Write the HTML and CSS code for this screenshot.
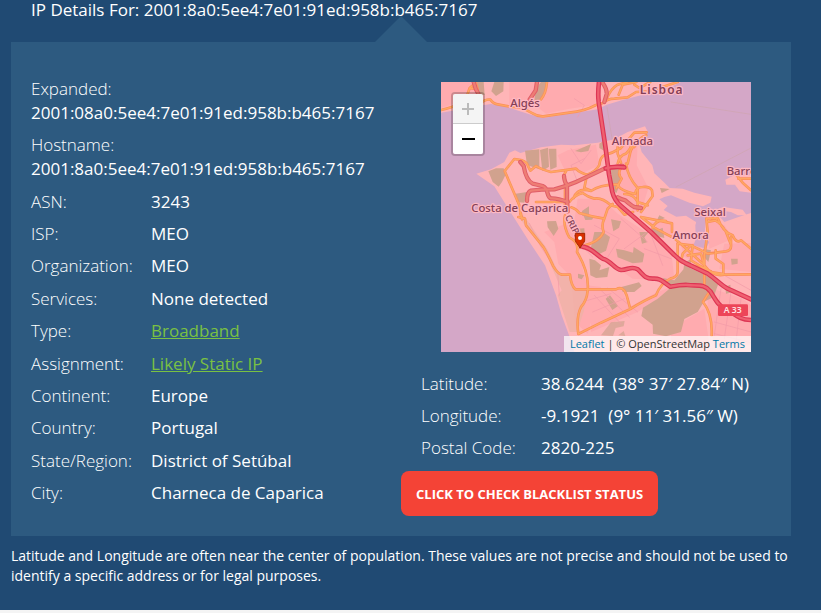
FILE: index.html
```html
<!DOCTYPE html>
<html lang="en">
<head>
<meta charset="utf-8">
<meta name="viewport" content="width=device-width, initial-scale=1">
<title>IP Details</title>
<link rel="stylesheet" href="styles.css">
</head>
<body>
<main class="page">
  <h1 class="title">IP Details For: 2001:8a0:5ee4:7e01:91ed:958b:b465:7167</h1>
  <section class="panel">
    <dl class="details">
      <div class="row stacked"><dt>Expanded:</dt><dd>2001:08a0:5ee4:7e01:91ed:958b:b465:7167</dd></div>
      <div class="row stacked"><dt>Hostname:</dt><dd>2001:8a0:5ee4:7e01:91ed:958b:b465:7167</dd></div>
      <div class="row"><dt>ASN:</dt><dd>3243</dd></div>
      <div class="row"><dt>ISP:</dt><dd>MEO</dd></div>
      <div class="row"><dt>Organization:</dt><dd>MEO</dd></div>
      <div class="row"><dt>Services:</dt><dd>None detected</dd></div>
      <div class="row"><dt>Type:</dt><dd><a href="#">Broadband</a></dd></div>
      <div class="row"><dt>Assignment:</dt><dd><a href="#">Likely Static IP</a></dd></div>
      <div class="row"><dt>Continent:</dt><dd>Europe</dd></div>
      <div class="row"><dt>Country:</dt><dd>Portugal</dd></div>
      <div class="row"><dt>State/Region:</dt><dd>District of Setúbal</dd></div>
      <div class="row"><dt>City:</dt><dd>Charneca de Caparica</dd></div>
    </dl>
    <div class="location">
      <div class="map">
        <svg class="tiles" viewBox="0 0 930 810" preserveAspectRatio="xMidYMid slice" role="img" aria-label="Map">
          <rect width="930" height="810" fill="#d4a7c7"/>
          <!-- land -->
          <g fill="#ffb5b7">
            <path d="M0 0H720L690 14L600 40L545 54L497 68L470 82L380 96L305 108L270 98L232 86L195 74L150 66L105 73L60 82L0 92Z"/>
            <path d="M106 275L150 262L190 240L205 212L222 205L238 213L300 196L360 188L400 190L470 182L520 172L560 150L612 133L621 150L595 185L602 210L634 250L640 274L668 300L686 318L725 320L760 332L812 344L808 362L786 373L745 362L690 340L670 345L655 352L680 372L668 384L706 404L735 401L765 420L764 470L780 470L788 404L835 403L850 420L884 408L908 400L930 393V810H400L385 762L362 700L345 640L312 550L262 475L205 385L160 313Z"/>
            <path d="M930 278L885 277L853 293L856 308L882 308L896 328L930 332Z"/>
            <path d="M824 383L846 375L905 383L917 400L890 400L870 390Z"/>
          </g>
          <!-- built-up areas -->
          <g fill="#ffa7ac" opacity=".7">
            <path d="M0 0H110L118 42L72 55L0 78Z"/><path d="M205 0H470L463 69L385 80L315 95L277 65L205 70Z"/>
            <path d="M310 450L388 420L408 490L437 610L480 615L440 755L402 720L390 585L352 545L340 480Z"/>
            <path d="M380 205L465 188L475 250L430 270L370 262L350 220ZM540 190L590 176L587 250L622 318L600 390L540 390L525 305Z"/>
            <path d="M410 350L485 352L530 395L630 460L690 500L700 595L575 590L510 545L437 495L395 450Z"/>
            <path d="M450 625L540 618L565 675L645 632L700 610L650 650L590 690L450 750ZM720 490L775 480L790 550L730 525ZM800 615L905 650L930 670V790H820L800 690ZM690 740L790 680L805 790H690ZM850 485L930 483V570L835 560Z"/>
            <path d="M620 420L690 425L700 470L640 450ZM800 415L850 430L875 470L805 500Z"/>
          </g>
          <!-- coastal dunes and open ground -->
          <path d="M248 400L318 500L350 566L388 588L402 625L438 625L428 690L408 750L386 750L350 640L362 625L312 508L240 415Z" fill="#edb1a5" opacity=".75"/>
          <!-- woodland -->
          <g fill="#d1a28e">
            <path d="M108 0H128L131 39L115 38ZM160 0H188L187 28L165 42L151 28ZM285 20L300 0H318L305 52L280 55Z"/>
            <path d="M252 206L295 202V262L258 249ZM297 204L321 197L324 254L304 267ZM323 200H346L347 255L328 263Z"/>
            <path d="M142 268L165 259L188 259L193 280L183 300L173 314L155 300ZM402 207L450 186L442 207L420 211ZM475 185L492 173L489 206L475 198ZM224 335L258 330L250 362L226 360ZM510 262L535 256L536 285L540 300L526 334L513 323Z"/>
            <path d="M318 418L345 417L352 440L338 462L320 436ZM423 387L444 373L444 397L424 402ZM427 400L460 403L453 413L433 414ZM410 440L430 439L431 460L415 473ZM460 450L485 450L507 465L495 506L475 516L449 500ZM510 412L540 418L534 437L517 448ZM525 500L550 505L576 512L578 495L610 515L605 541L575 544L530 526ZM595 450L623 450L610 466L618 481L603 485ZM630 440L655 442L665 437L670 468L646 462ZM655 400L672 408L645 420Z"/>
            <path d="M445 530L462 535L480 550L475 565L505 555L499 585L465 588L448 580ZM411 575L430 580L422 592L411 588ZM541 615L594 601L602 612L580 630L545 630ZM494 650L507 640L531 672L514 684ZM665 588L700 595L735 553L795 580L834 600L825 625L818 645L788 660L770 690L730 711L720 750L675 763L636 755L635 728L601 702L606 677L650 650L688 618ZM730 543L751 530L748 560L726 570ZM853 615L868 608L869 632L855 635ZM786 500L810 505L802 540L785 520ZM870 530H890V545L872 548ZM657 318L686 321L662 333Z"/>
            <path d="M480 760L510 721L551 717L548 733L524 738L516 762ZM532 760L548 747L553 762Z" opacity=".7"/>
          </g>
          <path d="M771 403L795 403L790 465L805 480L795 500L758 490L765 468L763 430Z" fill="#d4a7c7"/>
          <!-- local streets and ferry lines -->
          <g class="line streets">
            <path d="M265 424L300 495L350 570L355 640M390 200L420 245L450 205M410 105L430 70L400 50M410 300L390 250L430 230"/>
            <path d="M460 640L540 725M480 625L565 705M500 618L590 690M440 655L510 635M455 690L550 650"/>
            <path d="M840 620L820 760M870 630L850 770M900 650L885 780M820 720L930 750M820 755L930 782M850 580L930 625"/>
            <path d="M420 490L455 525M460 430L535 470L500 525M550 500L625 445L665 550M610 500L690 530M540 410L620 480"/>
            <path class="ferry" d="M690 60L930 97M930 198L705 315M498 75L515 182"/>
          </g>
          <!-- main roads -->
          <defs>
            <g id="main-roads">
              <path d="M0 84Q40 75 72 58L86 18L110 22L104 0M86 18L100 6M118 64Q135 50 148 53Q158 66 170 67L212 75Q235 74 248 80L275 94Q290 104 307 103L385 92Q430 88 465 69L486 63Q500 50 520 50L560 46L585 30L625 28L710 0M498 48Q510 20 530 8L560 0M533 38L545 8L586 0M300 52Q315 35 318 0M628 0L595 18L580 8"/>
              <path d="M243 412L235 370L191 267L220 231L240 234Q258 240 260 250L268 266L285 252Q300 262 330 270L405 260Q415 272 438 278Q465 268 475 249Q478 225 490 220Q515 213 540 198L580 152L617 151M438 278L430 318L447 325M375 268Q365 280 372 292V370"/>
              <path d="M232 405L252 410L255 430L308 496Q322 520 337 553Q350 575 362 578H387Q390 610 403 622H525Q540 614 550 625L557 640L568 681Q610 655 645 640Q658 605 688 590Q710 585 710 570V485M243 410L238 395M372 400Q365 430 385 466Q414 480 408 510Q445 570 440 625Q438 655 420 675Q405 705 412 756L480 722L568 681M285 360H385Q400 340 425 333Q440 345 460 350Q482 345 510 370L530 375L550 398L576 390M391 376Q405 380 415 393Q455 405 490 410Q480 430 488 450Q475 480 425 492M490 410L500 380L515 366"/>
              <path d="M398 348Q410 315 450 327Q480 306 530 308Q535 325 582 336Q585 315 605 315Q625 312 633 325L635 342L600 390M540 258Q528 275 542 290L526 318M555 245Q560 285 590 318V360L620 370M550 336Q580 337 590 360V385M530 195V215L540 242M575 180Q570 200 555 215Q535 220 530 245M592 178Q570 195 567 215L560 245M616 160Q595 165 580 195"/>
              <path d="M600 405L645 440L700 469L736 500L790 550Q815 585 850 578L930 577M600 405L650 415L693 424V450M635 438Q645 410 675 417M710 485L750 490L800 515L855 508Q872 505 870 488V465M796 410L800 450L790 520V610M796 410L830 408Q845 450 875 460Q885 485 900 475L930 500M800 420L822 415Q842 425 855 450L870 488M750 490L725 515L720 540L810 568M755 490L750 535L795 562M824 505V530L847 546V576L810 570M740 520L780 515L792 560M790 610L805 630L786 660Q815 695 812 760"/>
              <path d="M885 277L905 302L930 325M892 290H930"/>
            </g>
            <g id="carriageways">
              <path d="M238 240L248 252Q255 295 275 305L305 312C325 320 315 345 330 349Q350 348 380 360M258 357Q258 330 270 326Q300 322 340 322Q370 315 405 300Q460 275 490 260L545 252M369 282Q370 300 378 308V350L380 388M483 0Q498 20 497 36L490 60M530 346Q540 352 553 355Q570 370 580 375L600 378M98 0L104 20L112 35M288 0L284 25L266 52"/>
            </g>
            <g id="motorways">
              <path d="M474 0Q470 35 473 60L482 120L494 200L504 277L514 330Q520 355 540 372L630 450L700 519Q715 535 735 544L800 575C830 595 840 610 860 620L930 652M494 259Q520 252 550 256"/>
              <path d="M424 494C450 497 462 515 485 530C510 535 520 562 540 564C560 565 570 550 590 562C605 575 610 590 635 590C660 588 665 600 688 614C700 612 720 608 740 609C770 612 790 605 808 628C825 655 830 668 850 680C880 690 885 712 930 714"/>
            </g>
          </defs>
          <use href="#main-roads" class="line main-edge"/>
          <use href="#main-roads" class="line main-core"/>
          <use href="#carriageways" class="line carriage-edge"/>
          <use href="#carriageways" class="line carriage-core"/>
          <use href="#motorways" class="line motorway-edge"/>
          <use href="#motorways" class="line motorway-core"/>
          <g class="places">
            <text x="252" y="76">Algés</text>
            <text x="662" y="36" class="city">Lisboa</text>
            <text x="574" y="189">Almada</text>
            <text x="236" y="390">Costa de Caparica</text>
            <text x="857" y="278" class="start">Barreiro</text>
            <text x="807" y="402">Seixal</text>
            <text x="749" y="472">Amora</text>
            <text x="0" y="0" class="road" transform="translate(371 405) rotate(62)">CRIPS</text>
          </g>
          <rect x="831" y="667" width="90" height="35" rx="4" fill="#ed4558"/>
          <text x="875" y="694" class="shield">A 33</text>
          <path d="M403 454H431V475C431 482 421 488 417 499C413 488 403 482 403 475Z" fill="#d93100" stroke="#a62500" stroke-width="3"/>
          <circle cx="417" cy="468" r="6" fill="#fff"/>
        </svg>
        <div class="zoom">
          <button type="button" class="disabled" aria-label="Zoom in" disabled>
            <svg viewBox="0 0 30 30" aria-hidden="true"><path d="M9 15H21M15 9V21" stroke="#bbb" stroke-width="2"/></svg>
          </button>
          <button type="button" aria-label="Zoom out">
            <svg viewBox="0 0 30 30" aria-hidden="true"><path d="M9 15H22" stroke="#000" stroke-width="2"/></svg>
          </button>
        </div>
        <div class="attribution"><a href="#">Leaflet</a> | © OpenStreetMap <a href="#">Terms</a></div>
      </div>
      <dl class="coords">
        <div class="row"><dt>Latitude:</dt><dd>38.6244&nbsp; (38° 37′ 27.84″ N)</dd></div>
        <div class="row"><dt>Longitude:</dt><dd>-9.1921&nbsp; (9° 11′ 31.56″ W)</dd></div>
        <div class="row"><dt>Postal Code:</dt><dd>2820-225</dd></div>
      </dl>
      <button type="button" class="blacklist">CLICK TO CHECK BLACKLIST STATUS</button>
    </div>
  </section>
  <p class="note">Latitude and Longitude are often near the center of population. These values are not precise and should not be used to identify a specific address or for legal purposes.</p>
</main>
</body>
</html>
```
FILE: styles.css
```css
* {
  box-sizing: border-box;
}

body {
  margin: 0;
  background: #f4f4f4;
  color: #fff;
  font-family: "Open Sans", "Noto Sans", sans-serif;
  font-size: 17px;
  line-height: 24px;
}

.page {
  padding: 0 30px 24px 11px;
  background: #204a73;
}

.title {
  position: relative;
  z-index: 1;
  margin: 0;
  padding: 0 20px 22px;
  font-size: 17px;
  font-weight: 400;
  line-height: 20px;
}

.panel {
  position: relative;
  display: grid;
  grid-template-columns: 1fr 1fr;
  padding: 35px 0 20px;
  background: #2d5a80;
}

.panel::before {
  content: "";
  position: absolute;
  bottom: 100%;
  left: 50%;
  margin-left: -26px;
  border: 26px solid transparent;
  border-top: 0;
  border-bottom-color: #2d5a80;
}

dl,
dd {
  margin: 0;
}

.details,
.coords {
  display: flex;
  flex-direction: column;
  gap: 8px;
  padding: 0 0 0 20px;
}

.details {
  justify-content: space-between;
  padding-bottom: 11px;
}

.row {
  display: grid;
  grid-template-columns: 120px 1fr;
}

.stacked {
  display: block;
}

dt {
  font-weight: 300;
}

dd {
  white-space: nowrap;
}

.details a {
  color: #7ac143;
}

.map {
  position: relative;
  height: 270px;
  margin: 5px 40px 20px;
  overflow: hidden;
}

.tiles {
  display: block;
  width: 100%;
  height: 100%;
}

.line {
  fill: none;
  stroke-linejoin: round;
  stroke-linecap: round;
}

.streets {
  stroke: #f29aa8;
  stroke-width: 2px;
}

.ferry {
  stroke: #cfa4af;
}

.main-edge {
  stroke: #fb8f5a;
  stroke-width: 8px;
}

.main-core {
  stroke: #ffa763;
  stroke-width: 4px;
}

.carriage-edge {
  stroke: #e05d68;
  stroke-width: 13px;
}

.carriage-core {
  stroke: #ee7d74;
  stroke-width: 7px;
}

.motorway-edge {
  stroke: #dd3554;
  stroke-width: 14px;
}

.motorway-core {
  stroke: #ef6070;
  stroke-width: 7px;
}

.places text {
  fill: #853f56;
  stroke: #ffb9c3;
  stroke-width: 7px;
  stroke-linejoin: round;
  paint-order: stroke;
  font-family: "Noto Sans", sans-serif;
  font-size: 34px;
  font-weight: 500;
  text-anchor: middle;
}

.places .city {
  font-size: 36px;
  font-weight: 600;
  letter-spacing: 3px;
}

.places .start,
.places .road {
  text-anchor: start;
}

.places .road {
  font-size: 27px;
}

.shield {
  fill: #ffe0e2;
  font-family: "Noto Sans", sans-serif;
  font-size: 26px;
  font-weight: 600;
  text-anchor: middle;
}

.zoom {
  position: absolute;
  top: 10px;
  left: 10px;
  border: 2px solid rgba(0, 0, 0, 0.2);
  border-radius: 4px;
  background-clip: padding-box;
}

.zoom button {
  display: block;
  width: 30px;
  height: 30px;
  padding: 0;
  border: 0;
  border-radius: 0 0 2px 2px;
  background: #fff;
}

.zoom .disabled {
  border-bottom: 1px solid #ccc;
  border-radius: 2px 2px 0 0;
  background: #f4f4f4;
}

.zoom svg {
  display: block;
}

.attribution {
  position: absolute;
  right: 0;
  bottom: 0;
  padding: 0 6px;
  background: rgba(255, 255, 255, 0.7);
  color: #333;
  font-size: 11px;
  line-height: 16px;
  white-space: nowrap;
}

.attribution a {
  color: #0078a8;
  text-decoration: none;
}

.blacklist {
  display: block;
  height: 45px;
  margin-top: 11px;
  padding: 0 15px;
  border: 0;
  border-radius: 8px;
  background: #f44336;
  color: #fff;
  font-family: inherit;
  font-size: 13px;
  font-weight: 700;
}

.note {
  margin: 0;
  padding-top: 10px;
  font-size: 14px;
  line-height: 20px;
}
```
